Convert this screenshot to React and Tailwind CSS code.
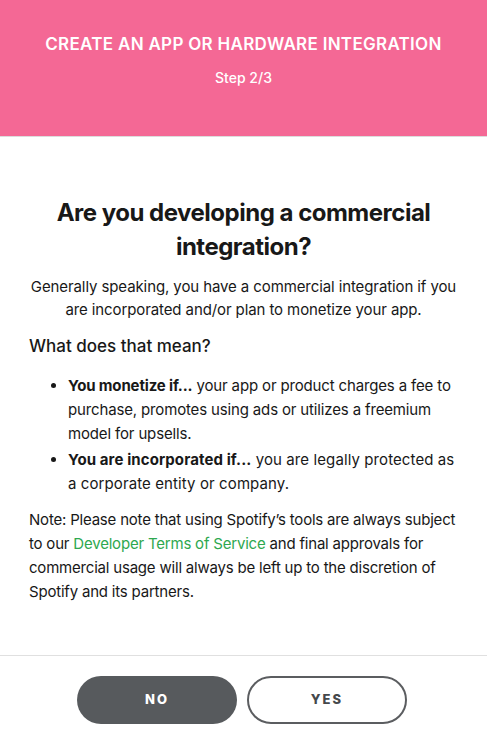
import React from "react";

export default function App() {
  return (
    <div className="min-h-[740px] bg-white text-[#181818]" style={{ fontFamily: "Inter, 'Noto Sans', sans-serif" }}>
      <header className="h-[137px] bg-[#f46895] border-b border-[#dcdcdc] flex flex-col items-center pt-[33px] text-white">
        <h1 className="text-[17px] font-semibold leading-[22px] tracking-[0.3px]">CREATE AN APP OR HARDWARE INTEGRATION</h1>
        <p className="text-[14px] font-medium mt-[13px] leading-[20px]">Step 2/3</p>
      </header>

      <main className="px-[29px] pt-[59px] pb-[51px]">
        <h2 className="text-center text-[24px] font-bold leading-[34px] px-[20px] tracking-[-0.5px]">
          Are you developing a commercial integration?
        </h2>
        <p className="text-center text-[15px] leading-[23px] mt-[11px] tracking-[-0.1px]">
          Generally speaking, you have a commercial integration if you are incorporated and/or plan to monetize your app.
        </p>
        <h3 className="text-[17px] font-medium mt-[13px] leading-[24px]">What does that mean?</h3>
        <ul className="list-disc pl-[39px] mt-[16px] text-[15px] leading-[24px] space-y-[2px]">
          <li className="tracking-[-0.15px]">
            <b className="font-bold">You monetize if...</b> your app or product charges a fee to purchase, promotes using ads or utilizes a freemium model for upsells.
          </li>
          <li className="tracking-[0.1px]">
            <b className="font-bold">You are incorporated if...</b> you are legally protected as a corporate entity or company.
          </li>
        </ul>
        <p className="text-[15px] leading-[24px] mt-[12px] tracking-[-0.2px]">
          Note: Please note that using Spotify’s tools are always subject to our{" "}
          <a className="text-[#2ea84f]">Developer Terms of Service</a> and final approvals for commercial usage will always be left up to the discretion of Spotify and its partners.
        </p>
      </main>

      <footer className="border-t border-[#e0e0e0] flex justify-center gap-[10px] pt-[20px] pr-[3px]">
        <button className="w-[160px] h-[48px] rounded-full bg-[#575a5d] text-white text-[13px] font-extrabold tracking-[2px]">NO</button>
        <button className="w-[160px] h-[48px] rounded-full border-2 border-[#5b5d60] text-[#45484b] text-[13px] font-extrabold tracking-[2px]">YES</button>
      </footer>
    </div>
  );
}
